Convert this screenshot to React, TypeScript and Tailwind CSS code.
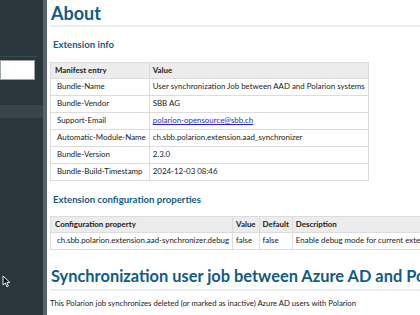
import React from "react";

const info = [
  ["Bundle-Name", "User synchronization Job between AAD and Polarion systems"],
  ["Bundle-Vendor", "SBB AG"],
  ["Support-Email", "polarion-opensource@sbb.ch"],
  ["Automatic-Module-Name", "ch.sbb.polarion.extension.aad_synchronizer"],
  ["Bundle-Version", "2.3.0"],
  ["Bundle-Build-Timestamp", "2024-12-03 08:46"],
];

const th = "border border-[#dcdcdc] bg-[#ececec] px-[3px] h-[16px] text-left font-bold";
const td = "border border-[#dcdcdc] px-[3px] h-[17px]";

const Sidebar = () => (
  <aside className="w-[47px] shrink-0 flex">
    <div className="w-[43px] bg-[#29363b] flex flex-col">
      <div className="h-[56px]" />
      <div className="h-px w-[37px] bg-[#3d4a4f]" />
      <div className="mt-[3px] h-[20px] w-[35px] bg-white border border-[#9aa3a6]" />
      <div className="h-[25px]" />
      <div className="h-[13px] bg-[#37444a]" />
      <div className="flex-1 relative">
        <svg className="absolute left-[2px] top-[157px]" width="9" height="13" viewBox="0 0 9 13">
          <path d="M1 1 L1 10 L3.3 8 L5 11.8 L6.4 11.1 L4.8 7.6 L7.8 7.4 Z" fill="#111" stroke="#fff" strokeWidth="0.9" />
        </svg>
      </div>
    </div>
    <div className="w-[4px] bg-[#58646a]" />
  </aside>
);

export default function App() {
  return (
    <div
      className="w-[420px] h-[315px] overflow-hidden flex bg-white text-[#1a1a1a] text-[7.9px]"
      style={{ fontFamily: 'Lato, "Noto Sans", sans-serif' }}
    >
      <Sidebar />
      <main className="flex-1 overflow-hidden pl-[3px] whitespace-nowrap">
        <h1 className="pt-[2px] text-[18px] font-bold text-[#135b83] leading-[23px] pl-[1px] border-b-2 border-[#e8eef2]">
          About
        </h1>
        <h2 className="mt-[11px] pl-[3px] text-[9.6px] font-bold text-[#135b83] leading-[14px]">
          Extension info
        </h2>
        <table className="mt-[10px] border-collapse w-[309px]">
          <thead>
            <tr>
              <th className={th + " w-[97px] pl-[4px]"}>Manifest entry</th>
              <th className={th}>Value</th>
            </tr>
          </thead>
          <tbody>
            {info.map(([k, v]) => (
              <tr key={k}>
                <td className={td + " pl-[6px]"}>{k}</td>
                <td className={td}>
                  {k === "Support-Email" ? (
                    <span className="text-[#2a1fd6] underline">{v}</span>
                  ) : (
                    v
                  )}
                </td>
              </tr>
            ))}
          </tbody>
        </table>
        <h2 className="mt-[12px] pl-[3px] text-[9.6px] font-bold text-[#135b83] leading-[14px]">
          Extension configuration properties
        </h2>
        <table className="mt-[9px] border-collapse">
          <thead>
            <tr>
              <th className={th + " w-[178px] pl-[4px]"}>Configuration property</th>
              <th className={th + " w-[27px]"}>Value</th>
              <th className={th + " w-[34px]"}>Default</th>
              <th className={th + " w-[160px]"}>Description</th>
            </tr>
          </thead>
          <tbody>
            <tr>
              <td className={td + " pl-[6px]"}>ch.sbb.polarion.extension.aad-synchronizer.debug</td>
              <td className={td}>false</td>
              <td className={td}>false</td>
              <td className={td}>Enable debug mode for current extension</td>
            </tr>
          </tbody>
        </table>
        <h1 className="mt-[14px] text-[16.4px] font-bold text-[#135b83] leading-[24px] pl-[1px] pb-[1px] border-b-2 border-[#e8eef2]">
          Synchronization user job between Azure AD and Polarion
        </h1>
        <p className="mt-[6px] leading-[12px] text-[7.7px]">
          This Polarion job synchronizes deleted (or marked as inactive) Azure AD users with Polarion
        </p>
      </main>
    </div>
  );
}
